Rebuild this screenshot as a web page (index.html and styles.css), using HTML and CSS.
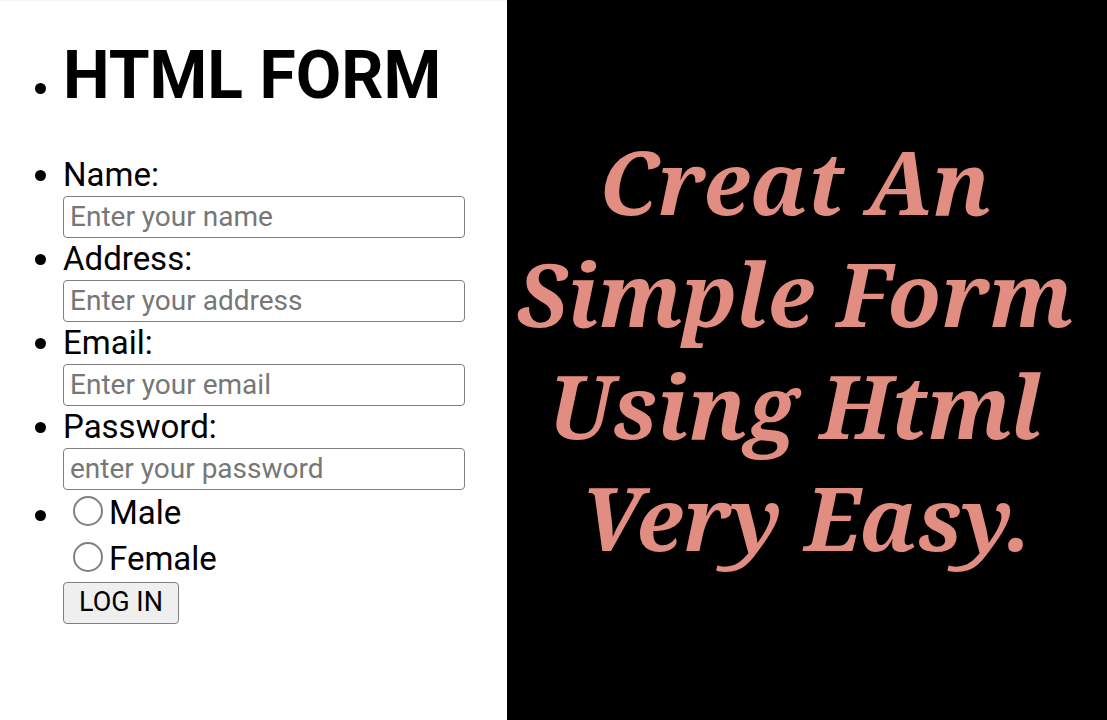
FILE: index.html
```
<!DOCTYPE html>
<html lang="en">
<head>
<meta charset="utf-8">
<title>HTML Form</title>
<link rel="stylesheet" href="styles.css">
</head>
<body>
<main class="page">
  <form class="form">
    <ul class="list">
      <li class="heading"><h1 class="title">HTML FORM</h1></li>
      <li class="field"><label class="label" for="name">Name:</label><input class="input" id="name" type="text" placeholder="Enter your name"></li>
      <li class="field"><label class="label" for="address">Address:</label><input class="input" id="address" type="text" placeholder="Enter your address"></li>
      <li class="field"><label class="label" for="email">Email:</label><input class="input" id="email" type="email" placeholder="Enter your email"></li>
      <li class="field"><label class="label" for="password">Password:</label><input class="input" id="password" type="password" placeholder="enter your password"></li>
      <li class="choices">
        <label class="choice"><input class="radio" type="radio" name="gender" value="male">Male</label>
        <label class="choice"><input class="radio" type="radio" name="gender" value="female">Female</label>
        <button class="button" type="submit">LOG IN</button>
      </li>
    </ul>
  </form>
  <section class="banner">
    <p class="slogan">Creat An<br>Simple Form<br>Using Html<br>&nbsp;Very Easy.</p>
  </section>
</main>
</body>
</html>
```
FILE: styles.css
```
* { box-sizing: border-box; }
body { margin: 0; background: #fff; color: #000; font-family: Roboto, sans-serif; }
.page { display: grid; grid-template-columns: 507fr 600fr; min-height: 100vh; }
.form { padding: 36px 42px 0 63px; border-top: 1px solid #f5f5f5; }
.list { margin: 0; padding: 0; list-style: none; font-size: 33px; line-height: 42px; }
.heading, .field, .choices { position: relative; }
.heading::before, .field::before, .choices::before {
  content: ""; position: absolute; left: -28px; top: 16px;
  width: 11px; height: 11px; border-radius: 50%; background: #000;
}
.heading { margin-bottom: 39px; }
.heading::before { top: 46px; }
.choices::before { top: 20px; }
.title { margin: 0; font-size: 66px; line-height: 78px; font-weight: 700; white-space: nowrap; }
.label { display: block; }
.input {
  display: block; width: 100%; height: 42px; padding: 0 6px 2px;
  border: 1px solid #808080; border-radius: 4px; background: #fff;
  font-family: inherit; font-size: 28px;
}
.input::placeholder { color: #777; opacity: 1; }
.choice { display: flex; align-items: center; height: 46px; padding-left: 10px; }
.radio {
  appearance: none; flex: none; width: 30px; height: 30px; margin: 0 6px 5px 0;
  border: 2px solid #808080; border-radius: 50%; background: #fff;
}
.radio:checked { background: #777; box-shadow: inset 0 0 0 5px #fff; }
.button {
  display: block; height: 42px; padding: 0 15px 2px; border: 1px solid #808080;
  border-radius: 4px; background: #efefef; color: #000; font-family: inherit; font-size: 27px;
}
.banner { display: flex; align-items: center; justify-content: center; background: #000; }
.slogan {
  margin: 0; padding: 0 24px 22px 0; color: #e28d82; text-align: center; white-space: nowrap;
  font-family: "Noto Serif", "DejaVu Serif", serif; font-style: italic; font-weight: 700;
  font-size: 87px; line-height: 112px;
}
```
